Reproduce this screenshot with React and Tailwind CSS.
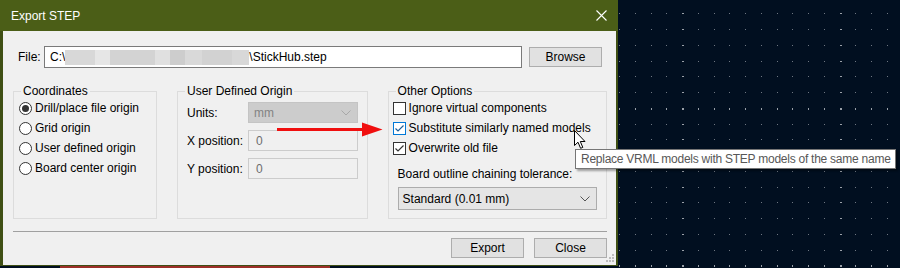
import React from 'react'

const GRID_X = Array.from({ length: 18 }, (_, i) => Math.round(619 + i * 15.76) - 618)
const GRID_Y = Array.from({ length: 17 }, (_, j) => Math.round(13.3 + j * 15.75))

const REDACT = [
  ['#d8d8d8', 30], ['#e6e6e6', 15], ['#d3d3d3', 45], ['#e0e0e0', 15],
  ['#cdcdcd', 15], ['#d9d9d9', 17], ['#d2d2d2', 30], ['#d8d8d8', 17],
]

function Chevron({ color }) {
  return (
    <svg width="10" height="6" viewBox="0 0 10 6">
      <polyline points="0.5,0.5 5,5 9.5,0.5" fill="none" stroke={color} strokeWidth="1" />
    </svg>
  )
}

function Radio({ checked, label }) {
  return (
    <div className="flex h-[20px] items-center">
      <span className="ml-[5px] flex h-[13px] w-[13px] items-center justify-center rounded-full border border-[#333333] bg-white">
        {checked && <span className="h-[7px] w-[7px] rounded-full bg-[#333333]" />}
      </span>
      <span className="ml-[3px]">{label}</span>
    </div>
  )
}

function Check({ checked, focus, label }) {
  return (
    <div className="flex h-[20px] items-center">
      <span
        className={
          'flex h-[13px] w-[13px] items-center justify-center border bg-white ' +
          (focus ? 'border-[#0078d7]' : 'border-[#333333]')
        }
      >
        {checked && (
          <svg width="11" height="11" viewBox="0 0 11 11">
            <polyline
              points="1.5,5.5 4,8 9.5,2.5"
              fill="none"
              stroke={focus ? '#1f5f9a' : '#333333'}
              strokeWidth="1.2"
            />
          </svg>
        )}
      </span>
      <span className="ml-[3px]">{label}</span>
    </div>
  )
}

function Group({ title, className, children }) {
  return (
    <fieldset className={'h-[135px] border border-[#dcdcdc] ' + className}>
      <legend className="ml-[7px] px-[2px] leading-[14px]">{title}</legend>
      {children}
    </fieldset>
  )
}

function Field({ label, children }) {
  return (
    <div className="flex h-[21px] items-center">
      <span className="w-[61px]">{label}</span>
      {children}
    </div>
  )
}

export default function App() {
  return (
    <div className="relative flex h-[268px] w-[900px] overflow-hidden bg-[#010f20] font-['Liberation_Sans',sans-serif] text-[12px] text-black">
      <div className="flex w-[618px] flex-col">
        {/* Dialog */}
        <div className="flex h-[266px] flex-col">
          <div className="flex h-[31px] items-center justify-between bg-[#4b5e17] pl-[11px] pr-[11px] text-white">
            <span>Export STEP</span>
            <svg width="11" height="11" viewBox="0 0 11 11">
              <path d="M0.5 0.5 L10.5 10.5 M10.5 0.5 L0.5 10.5" stroke="#ffffff" strokeWidth="1.1" />
            </svg>
          </div>

          <div className="relative flex flex-1 flex-col border-b border-l-[3px] border-r-2 border-[#3f4f14] bg-[#f0f0f0] pl-[10px] pr-[9px]">
            {/* File row */}
            <div className="mt-[15px] flex h-[22px] items-center">
              <span className="ml-[5px] w-[26px]">File:</span>
              <div className="flex h-[22px] w-[478px] items-center border border-[#7a7a7a] bg-white pl-[5px]">
                <span>C:\</span>
                <span className="flex h-[15px]">
                  {REDACT.map(([c, w], i) => (
                    <span key={i} className="h-full" style={{ background: c, width: w }} />
                  ))}
                </span>
                <span>\StickHub.step</span>
              </div>
              <button className="ml-[7px] flex h-[20px] w-[73px] items-center justify-center border border-[#adadad] bg-[#e1e1e1]">
                Browse
              </button>
            </div>

            {/* Groups */}
            <div className="mt-[16px] flex gap-[20px]">
              <Group title="Coordinates" className="w-[145px]">
                <Radio checked label="Drill/place file origin" />
                <Radio label="Grid origin" />
                <Radio label="User defined origin" />
                <Radio label="Board center origin" />
              </Group>

              <Group title="User Defined Origin" className="w-[192px]">
                <div className="mt-[4px] flex flex-col gap-[7px] pl-[9px]">
                  <Field label="Units:">
                    <div className="flex h-[21px] w-[110px] items-center justify-between border border-[#c4c4c4] bg-[#cccccc] pl-[5px] pr-[6px] text-[#838383]">
                      <span>mm</span>
                      <Chevron color="#a8a8a8" />
                    </div>
                  </Field>
                  <Field label="X position:">
                    <div className="flex h-[21px] w-[110px] items-center border border-[#cccccc] pl-[7px] text-[#6d6d6d]">0</div>
                  </Field>
                  <Field label="Y position:">
                    <div className="flex h-[21px] w-[110px] items-center border border-[#cccccc] pl-[7px] text-[#6d6d6d]">0</div>
                  </Field>
                </div>
              </Group>

              <Group title="Other Options" className="w-[221px]">
                <div className="pl-[4px]">
                  <Check label="Ignore virtual components" />
                  <Check checked focus label="Substitute similarly named models" />
                  <Check checked label="Overwrite old file" />
                </div>
                <div className="mt-[8px] pl-[9px] leading-[16px]">Board outline chaining tolerance:</div>
                <div className="ml-[9px] mt-[5px] flex h-[23px] w-[199px] items-center justify-between border border-[#acacac] bg-[#e5e5e5] pl-[4px] pr-[6px]">
                  <span>Standard (0.01 mm)</span>
                  <Chevron color="#555555" />
                </div>
              </Group>
            </div>

            <div className="mt-[12px] h-px w-[594px] bg-[#a0a0a0]" />

            <div className="mt-[6px] flex w-[594px] justify-end gap-[10px]">
              <button className="flex h-[20px] w-[73px] items-center justify-center border border-[#adadad] bg-[#e1e1e1]">Export</button>
              <button className="flex h-[20px] w-[73px] items-center justify-center border border-[#adadad] bg-[#e1e1e1]">Close</button>
            </div>

            <svg className="absolute bottom-[2px] right-[1px]" width="10" height="10" viewBox="0 0 10 10">
              {[[7, 1], [4, 4], [7, 4], [1, 7], [4, 7], [7, 7]].map(([x, y]) => (
                <rect key={x + '-' + y} x={x} y={y} width="2" height="2" fill="#bcbcbc" />
              ))}
            </svg>
          </div>
        </div>
        <div className="flex h-[2px]">
          <div className="ml-[60px] w-[270px] bg-[#9c2f29]" />
        </div>
      </div>

      {/* PCB canvas */}
      <svg className="flex-1" width="282" height="268">
        {GRID_X.map((x, i) =>
          GRID_Y.map((y, j) => {
            const major = i % 10 === 4 || j % 10 === 6
            return (
              <rect
                key={i + '-' + j}
                x={x}
                y={y}
                width={i % 10 === 4 ? 2 : 1}
                height={j % 10 === 6 ? 2 : 1}
                fill={major ? '#9aa0a8' : '#6f7782'}
              />
            )
          })
        )}
      </svg>

      {/* annotation arrow */}
      <svg className="absolute left-[277px] top-[122px]" width="106" height="15" viewBox="0 0 106 15">
        <rect x="0" y="6" width="87" height="3" fill="#f00f0f" />
        <polygon points="85,0.5 105.5,7.5 85,14.5" fill="#f00f0f" />
      </svg>

      {/* mouse cursor */}
      <svg className="absolute left-[574px] top-[130px]" width="13" height="20" viewBox="0 0 13 20">
        <path d="M0.5 0.5 L0.5 15.5 L4 12.2 L6.6 18.3 L8.8 17.4 L6.3 11.5 L11 11.5 Z" fill="#ffffff" stroke="#000000" strokeWidth="1" />
      </svg>

      {/* tooltip */}
      <div className="absolute left-[575px] top-[149px] flex h-[20px] w-[321px] items-center whitespace-nowrap border border-[#767676] bg-white pl-[5px] tracking-[-0.25px] text-[#575757] shadow-[2px_2px_2px_rgba(0,0,0,0.35)]">
        Replace VRML models with STEP models of the same name
      </div>
    </div>
  )
}
